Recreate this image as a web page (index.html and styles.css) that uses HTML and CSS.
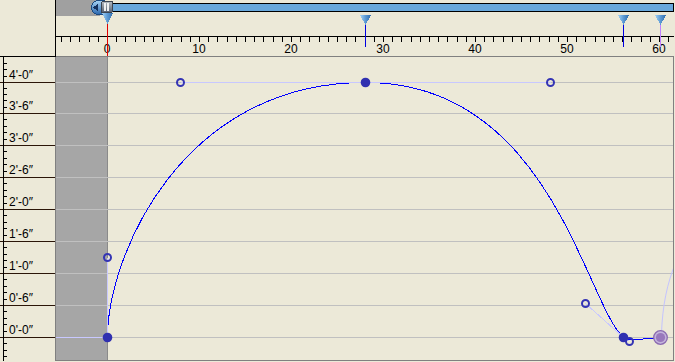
FILE: index.html
```html
<!DOCTYPE html>
<html lang="en">
<head>
    <meta charset="UTF-8">
    <title>Curve Editor</title>
    <link rel="stylesheet" href="styles.css">
</head>
<body>
    <div class="editor">
        <div class="corner"></div>

        <!-- time ruler -->
        <div class="timebar">
            <div class="track">
                <div class="track-done"></div>
                <div class="track-bar"></div>
            </div>
            <div class="frame-labels">
                <span>0</span><span>10</span><span>20</span><span>30</span><span>40</span><span>50</span><span>60</span>
            </div>
            <svg class="time-marks" width="618" height="56" viewBox="56 0 618 56">
                <defs>
                    <linearGradient id="keyFill" x1="0" y1="0" x2="1" y2="0">
                        <stop offset="0" stop-color="#a4d2f4"/>
                        <stop offset="0.5" stop-color="#5c9ad4"/>
                        <stop offset="1" stop-color="#2f6cad"/>
                    </linearGradient>
                    <linearGradient id="thumbFill" x1="0" y1="0" x2="0" y2="1">
                        <stop offset="0" stop-color="#a8d4f6"/>
                        <stop offset="1" stop-color="#2a66ad"/>
                    </linearGradient>
                    <linearGradient id="gripFill" x1="0" y1="0" x2="0" y2="1">
                        <stop offset="0" stop-color="#b4bcc4"/>
                        <stop offset="1" stop-color="#566070"/>
                    </linearGradient>
                </defs>
                <path d="M56 36.5H674" stroke="#000"/>
                <path stroke="#000" d="M61.5 37v5M70.5 37v5M79.5 37v5M89.5 37v5M98.5 37v5M107.5 37v5M116.5 37v5M125.5 37v5M135.5 37v5M144.5 37v5M153.5 37v5M162.5 37v5M171.5 37v5M181.5 37v5M190.5 37v5M199.5 37v5M208.5 37v5M217.5 37v5M227.5 37v5M236.5 37v5M245.5 37v5M254.5 37v5M263.5 37v5M273.5 37v5M282.5 37v5M291.5 37v5M300.5 37v5M309.5 37v5M319.5 37v5M328.5 37v5M337.5 37v5M346.5 37v5M355.5 37v5M365.5 37v5M374.5 37v5M383.5 37v5M392.5 37v5M401.5 37v5M411.5 37v5M420.5 37v5M429.5 37v5M438.5 37v5M447.5 37v5M457.5 37v5M466.5 37v5M475.5 37v5M484.5 37v5M493.5 37v5M503.5 37v5M512.5 37v5M521.5 37v5M530.5 37v5M539.5 37v5M549.5 37v5M558.5 37v5M567.5 37v5M576.5 37v5M585.5 37v5M595.5 37v5M604.5 37v5M613.5 37v5M622.5 37v5M631.5 37v5M641.5 37v5M650.5 37v5M659.5 37v5M668.5 37v5"/>

                <!-- key markers -->
                <path d="M365.5 24V47M623.5 24V47" stroke="#0000e0"/>
                <path d="M660.5 24V47" stroke="#c080ff"/>
                <path d="M360 15H371L365.5 25Z" fill="url(#keyFill)"/>
                <path d="M618 15H629L623.5 25Z" fill="url(#keyFill)"/>
                <path d="M655 15H666L660.5 25Z" fill="url(#keyFill)"/>

                <!-- time slider -->
                <path d="M107.5 22V56" stroke="#e00000"/>
                <path d="M104 0.5H98.5A7 7 0 0 0 98.5 14.5H104Z" fill="url(#thumbFill)" stroke="#1c4a80"/>
                <path d="M93 7.5L97.5 4V11Z" fill="#15305e"/>
                <rect x="101.5" y="1.5" width="11" height="11" rx="1.5" fill="url(#gripFill)" stroke="#3c4450"/>
                <rect x="104" y="3" width="2" height="8" fill="#eef0f2"/>
                <rect x="107" y="3" width="2" height="8" fill="#eef0f2"/>
                <path d="M102 13H113L107.5 24Z" fill="url(#keyFill)"/>
            </svg>
        </div>

        <!-- value ruler -->
        <div class="value-ruler">
            <div class="value-row first"><span>4'-0″</span></div>
            <div class="value-row second"><span>3'-6″</span></div>
            <div class="value-row"><span>3'-0″</span></div>
            <div class="value-row"><span>2'-6″</span></div>
            <div class="value-row"><span>2'-0″</span></div>
            <div class="value-row"><span>1'-6″</span></div>
            <div class="value-row"><span>1'-0″</span></div>
            <div class="value-row"><span>0'-6″</span></div>
            <div class="value-row"><span>0'-0″</span></div>
            <svg class="value-ticks" width="8" height="304" viewBox="0 57 8 304">
                <path d="M3.5 57V361" stroke="#000"/>
                <path stroke="#000" d="M4 63.5h3M4 69.5h3M4 76.5h3M4 88.5h3M4 94.5h3M4 100.5h3M4 107.5h3M4 119.5h3M4 126.5h3M4 132.5h3M4 139.5h3M4 151.5h3M4 158.5h3M4 164.5h3M4 171.5h3M4 183.5h3M4 190.5h3M4 196.5h3M4 203.5h3M4 215.5h3M4 222.5h3M4 228.5h3M4 235.5h3M4 247.5h3M4 254.5h3M4 260.5h3M4 267.5h3M4 279.5h3M4 286.5h3M4 292.5h3M4 299.5h3M4 311.5h3M4 318.5h3M4 324.5h3M4 331.5h3M4 343.5h3M4 350.5h3M4 356.5h3"/>
            </svg>
        </div>

        <!-- curve graph -->
        <div class="graph">
            <svg width="617" height="303" viewBox="56 57 617 303">
                <rect x="56" y="57" width="51" height="303" fill="#a6a6a6"/>
                <path d="M107.5 57V360" stroke="#8a8a8a"/>
                <path stroke="#c0c0c0" d="M56 82.5H673M56 113.5H673M56 145.5H673M56 177.5H673M56 209.5H673M56 241.5H673M56 273.5H673M56 305.5H673M56 337.5H673"/>

                <path class="curve" d="M107.5 337.5C107.5 257.5 180.5 82.5 365.5 82.5C550.5 82.5 585.5 303.5 623.5 337.5C629.5 341.5 645 338.5 660.5 337.5"/>
                <path class="curve-ghost" d="M661.5 333C662.5 306 667 283 676 262"/>

                <path class="handle-line" d="M56 337.5H107M107.5 337V257.5M180.5 82.5H550.5M585.5 303.5L623.5 337.5L629.5 341.5"/>
                <circle class="handle" cx="107.5" cy="257.5" r="3.5"/>
                <circle class="handle" cx="180.5" cy="82.5" r="3.5"/>
                <circle class="handle" cx="550.5" cy="82.5" r="3.5"/>
                <circle class="handle" cx="585.5" cy="303.5" r="3.5"/>
                <circle class="handle" cx="629.5" cy="341.5" r="3.5"/>

                <circle class="key" cx="107.5" cy="337.5" r="4.8"/>
                <circle class="key" cx="365.5" cy="82.5" r="4.8"/>
                <circle class="key" cx="623.5" cy="337.5" r="4.8"/>
                <circle cx="660.5" cy="337.5" r="6.8" fill="#c4b4dc" stroke="#8a6ab0" stroke-width="1.3"/>
                <circle cx="660.5" cy="337.5" r="4.6" fill="#9878bc"/>
            </svg>
        </div>
    </div>
</body>
</html>
```

FILE: styles.css
```css
* {
    box-sizing: border-box;
    margin: 0;
    padding: 0;
}

body {
    width: 675px;
    height: 362px;
    overflow: hidden;
    background-color: #ece9d8;
    font-family: "Liberation Sans", Arial, sans-serif;
    font-size: 11px;
    color: #000;
}

.editor {
    display: grid;
    grid-template-columns: 56px 618px;
    grid-template-rows: 57px 304px;
}

.corner {
    border-right: 1px solid #000;
    border-bottom: 1px solid #000;
}

/* time ruler */
.timebar {
    position: relative;
    display: flex;
    flex-direction: column;
    justify-content: space-between;
    border-bottom: 1px solid #808080;
}

.track {
    display: flex;
    height: 16px;
}

.track-done {
    width: 44px;
    background-color: #a0a0a0;
}

.track-bar {
    flex: 1;
    height: 9px;
    margin-top: 3px;
    border: 1px solid #000;
    background-color: #68a8dc;
}

.frame-labels {
    display: flex;
    margin-left: 5px;
    height: 13px;
    line-height: 13px;
    font-size: 12px;
}

.frame-labels span {
    flex: 0 0 92px;
    text-align: center;
}

.time-marks {
    position: absolute;
    top: 0;
    left: 0;
    shape-rendering: crispEdges;
}

/* value ruler */
.value-ruler {
    position: relative;
    border-right: 1px solid #808080;
}

.value-row {
    display: flex;
    align-items: flex-end;
    height: 32px;
    padding-left: 9px;
    font-size: 12px;
    line-height: 13px;
    border-bottom: 1px solid #2b1608;
}

.value-row.first {
    height: 26px;
}

.value-row.second {
    height: 31px;
}

.value-ticks {
    position: absolute;
    top: 0;
    left: 0;
    shape-rendering: crispEdges;
}

/* curve graph */
.graph {
    border-right: 1px solid #808080;
    border-bottom: 1px solid #808080;
    overflow: hidden;
}

.graph svg {
    display: block;
}

.curve {
    fill: none;
    stroke: #0000ff;
    stroke-width: 1;
    shape-rendering: crispEdges;
}

.curve-ghost {
    fill: none;
    stroke: #c4c4ff;
}

.handle-line {
    fill: none;
    stroke: #c8c8ff;
    shape-rendering: crispEdges;
}

.handle {
    fill: none;
    stroke: #3434b4;
    stroke-width: 2;
}

.key {
    fill: #3030b0;
}
```
